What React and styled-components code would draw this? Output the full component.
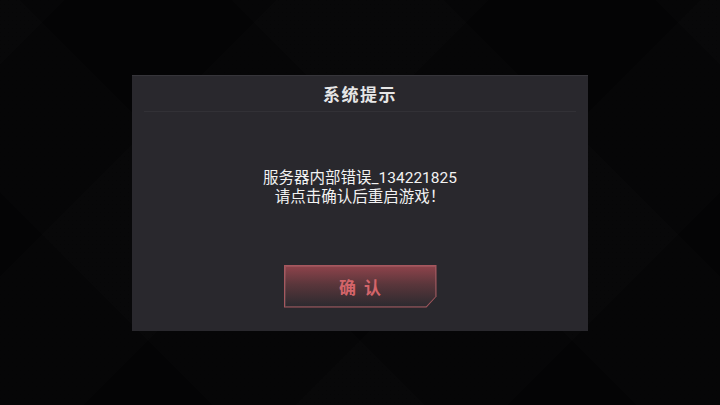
import styled, { createGlobalStyle } from "styled-components";

const GlobalStyle = createGlobalStyle`
  html, body {
    margin: 0;
    padding: 0;
    height: 100%;
  }
  body {
    background: #040405;
    font-family: "Roboto", "Noto Sans CJK SC", sans-serif;
  }
  #root {
    height: 100%;
  }
`;

const Screen = styled.div`
  width: 720px;
  height: 405px;
  display: flex;
  align-items: center;
  justify-content: center;
  overflow: hidden;
  background-color: #040405;
  background-image:
    repeating-linear-gradient(45deg, rgba(255, 255, 255, 0) 0px, rgba(255, 255, 255, 0) 150px, rgba(255, 255, 255, 0.008) 150px, rgba(255, 255, 255, 0.008) 300px),
    repeating-linear-gradient(-45deg, rgba(255, 255, 255, 0) 0px, rgba(255, 255, 255, 0) 150px, rgba(255, 255, 255, 0.007) 150px, rgba(255, 255, 255, 0.007) 300px);
`;

const Dialog = styled.div`
  width: 456px;
  height: 256px;
  box-sizing: border-box;
  background: #29282d;
  border-top: 1px solid #36353a;
  display: flex;
  flex-direction: column;
  align-items: center;
`;

const Header = styled.div`
  align-self: stretch;
  margin: 0 12px;
  height: 35px;
  display: flex;
  align-items: center;
  justify-content: center;
  border-bottom: 1px solid #323136;
`;

const Title = styled.h2`
  margin: 0;
  font-size: 17px;
  font-weight: 700;
  letter-spacing: 1.5px;
  color: #e6e6e6;
  font-family: "Noto Sans CJK SC", sans-serif;
`;

const Message = styled.p`
  margin: 57px 0 0;
  text-align: center;
  font-size: 15.5px;
  line-height: 19px;
  color: #f2f2f2;
`;

const Button = styled.button`
  margin-top: 58px;
  width: 153px;
  height: 43px;
  padding: 1px;
  border: none;
  background: #a6575e;
  clip-path: polygon(0 0, 100% 0, 100% calc(100% - 11px), calc(100% - 10px) 100%, 0 100%);
  cursor: pointer;
`;

const ButtonFace = styled.span`
  display: flex;
  align-items: center;
  justify-content: center;
  width: 100%;
  height: 100%;
  background: linear-gradient(180deg, #8e434b 0%, #5a363b 45%, #2b2a2f 100%);
  clip-path: polygon(0 0, 100% 0, 100% calc(100% - 10px), calc(100% - 9.5px) 100%, 0 100%);
  box-shadow: inset 0 0 0 1px rgba(255, 200, 200, 0.12);
  color: #d4656a;
  font-family: "Noto Sans CJK SC", sans-serif;
  font-size: 17px;
  font-weight: 700;
  letter-spacing: 8px;
  text-indent: 8px;
`;

export default function App() {
  return (
    <>
      <GlobalStyle />
      <Screen>
        <Dialog>
          <Header>
            <Title>系统提示</Title>
          </Header>
          <Message>
            服务器内部错误_134221825
            <br />
            请点击确认后重启游戏！
          </Message>
          <Button>
            <ButtonFace>确认</ButtonFace>
          </Button>
        </Dialog>
      </Screen>
    </>
  );
}
